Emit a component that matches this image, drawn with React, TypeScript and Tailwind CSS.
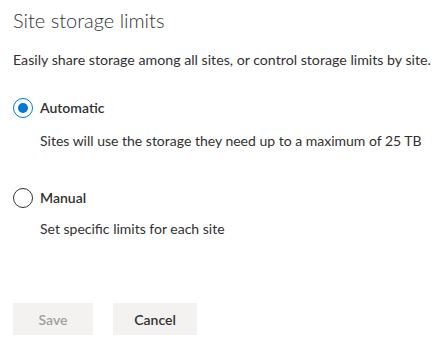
import React, { useState } from "react";

const options = [
  {
    key: "auto",
    label: "Automatic",
    hint: "Sites will use the storage they need up to a maximum of 25 TB",
  },
  {
    key: "manual",
    label: "Manual",
    hint: "Set specific limits for each site",
  },
];

function Radio({ checked }: { checked: boolean }) {
  return (
    <span
      className={
        checked
          ? "flex h-5 w-5 shrink-0 items-center justify-center rounded-full border border-[#0078d4]"
          : "flex h-5 w-5 shrink-0 items-center justify-center rounded-full border border-[#323130]"
      }
    >
      {checked && <span className="h-[10px] w-[10px] rounded-full bg-[#0078d4]" />}
    </span>
  );
}

export default function App() {
  const [mode, setMode] = useState("auto");

  return (
    <div
      className="h-[348px] w-[442px] overflow-hidden bg-white px-[13px] pt-[6px] text-[#323130]"
      style={{ fontFamily: 'Lato, "Open Sans", sans-serif' }}
    >
      <h1 className="text-[20px] font-light leading-[28px] text-[#333]">Site storage limits</h1>
      <p className="mt-[16px] whitespace-nowrap text-[14.2px] leading-[20px]">
        Easily share storage among all sites, or control storage limits by site.
      </p>

      <div className="mt-[28px] flex flex-col">
        {options.map((opt, i) => (
          <div key={opt.key} className={i > 0 ? "mt-[37px]" : ""}>
            <button
              type="button"
              onClick={() => setMode(opt.key)}
              className="flex items-center gap-[7px]"
            >
              <Radio checked={mode === opt.key} />
              <span className="text-[14px] font-semibold leading-[20px]">{opt.label}</span>
            </button>
            <p
              className={
                i > 0
                  ? "mt-[11px] whitespace-nowrap pl-[27px] text-[14px] leading-[20px]"
                  : "mt-[13px] whitespace-nowrap pl-[27px] text-[14px] leading-[20px]"
              }
            >
              {opt.hint}
            </p>
          </div>
        ))}
      </div>

      <div className="mt-[64px] flex gap-5">
        <button
          type="button"
          disabled
          className="h-8 w-20 bg-[#f3f2f1] text-[14px] font-semibold text-[#a19f9d]"
        >
          Save
        </button>
        <button
          type="button"
          className="h-8 w-[84px] bg-[#f3f2f1] text-[14px] font-semibold text-[#323130]"
        >
          Cancel
        </button>
      </div>
    </div>
  );
}
